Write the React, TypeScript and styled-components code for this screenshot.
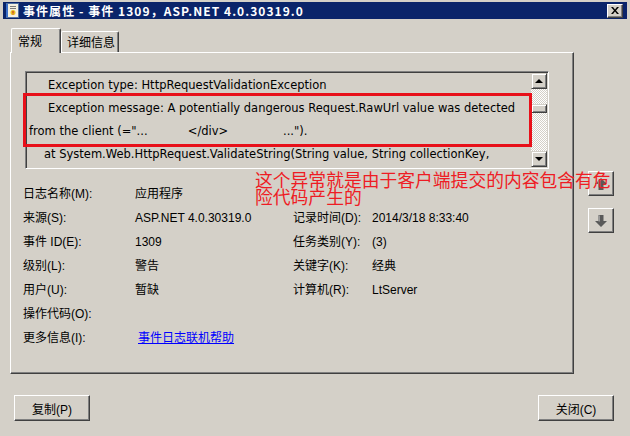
import styled, { createGlobalStyle } from "styled-components";

const FACE = "#d4d0c8";
const SHADOW = "#808080";
const DARK = "#404040";

const GlobalStyle = createGlobalStyle`
  html, body {
    margin: 0;
    padding: 0;
    background: ${FACE};
  }
  body {
    font-family: "Liberation Sans", "Noto Sans CJK SC", sans-serif;
    font-size: 12px;
    color: #000;
  }
`;

const PROPS: { label: string; value: string; label2?: string; value2?: string; link?: boolean }[] = [
  { label: "日志名称(M):", value: "应用程序" },
  { label: "来源(S):", value: "ASP.NET 4.0.30319.0", label2: "记录时间(D):", value2: "2014/3/18 8:33:40" },
  { label: "事件 ID(E):", value: "1309", label2: "任务类别(Y):", value2: "(3)" },
  { label: "级别(L):", value: "警告", label2: "关键字(K):", value2: "经典" },
  { label: "用户(U):", value: "暂缺", label2: "计算机(R):", value2: "LtServer" },
  { label: "操作代码(O):", value: "" },
  { label: "更多信息(I):", value: "事件日志联机帮助", link: true },
];

export default function App() {
  return (
    <>
      <GlobalStyle />
      <Window>
        <TitleBar>
          <TitleIcon />
          <TitleText>事件属性 - 事件 1309，ASP.NET 4.0.30319.0</TitleText>
          <CloseButton>
            <svg width="8" height="7" viewBox="0 0 8 7">
              <path d="M0 0h2l2 2.5L6 0h2L5 3.5 8 7H6L4 4.5 2 7H0l3-3.5z" fill="#000" />
            </svg>
          </CloseButton>
        </TitleBar>

        <Body>
          <MainColumn>
            <TabRow>
              <Tab $active $width={50}>常规</Tab>
              <Tab $width={58}>详细信息</Tab>
            </TabRow>
            <TabPanel>
              <MessageBox>
                <MessageText>
                  <Line $indent={19}>Exception type: HttpRequestValidationException</Line>
                  <Line $indent={19}>
                    Exception message: A potentially dangerous Request.RawUrl value was detected from the
                    client (="...&nbsp;&nbsp;&nbsp;&nbsp;&nbsp;&nbsp;&nbsp;&nbsp;&nbsp;&nbsp;&nbsp;&lt;/div&gt;&nbsp;&nbsp;&nbsp;&nbsp;&nbsp;&nbsp;&nbsp;&nbsp;&nbsp;&nbsp;&nbsp;&nbsp;&nbsp;&nbsp;&nbsp;...").
                  </Line>
                  <Line $indent={15}>at System.Web.HttpRequest.ValidateString(String value, String collectionKey,</Line>
                </MessageText>
                <ScrollBar>
                  <ScrollArrow>
                    <Triangle $up />
                  </ScrollArrow>
                  <ScrollTrack>
                    <ScrollThumb />
                  </ScrollTrack>
                  <ScrollArrow>
                    <Triangle />
                  </ScrollArrow>
                </ScrollBar>
                <Highlight />
              </MessageBox>

              <PropGrid>
                {PROPS.map((p) => (
                  <PropRow key={p.label}>
                    <PropLabel>{p.label}</PropLabel>
                    {p.link ? <LinkValue>{p.value}</LinkValue> : <PropValue>{p.value}</PropValue>}
                    <PropLabel>{p.label2 ?? ""}</PropLabel>
                    <PropValue>{p.value2 ?? ""}</PropValue>
                  </PropRow>
                ))}
              </PropGrid>
            </TabPanel>
          </MainColumn>

          <SideColumn>
            <NavButton>
              <svg width="14" height="14" viewBox="0 0 14 14">
                <path d="M7 1L1 7h3.5v6h5V7H13z" fill="#5a5a5a" />
                <path d="M7 1L4 4v3h1.5V4.5L7 3z" fill="#9a9a9a" />
              </svg>
            </NavButton>
            <NavButton>
              <svg width="14" height="14" viewBox="0 0 14 14">
                <path d="M7 13L1 7h3.5V1h5v6H13z" fill="#5a5a5a" />
                <path d="M4.5 1.5h1.5v6H4.5z" fill="#9a9a9a" />
              </svg>
            </NavButton>
          </SideColumn>
        </Body>

        <Footer>
          <PushButton>复制(P)</PushButton>
          <PushButton>关闭(C)</PushButton>
        </Footer>

        <Annotation>
          这个异常就是由于客户端提交的内容包含有危
          <br />
          险代码产生的
        </Annotation>
      </Window>
    </>
  );
}

function TitleIcon() {
  return (
    <svg width="15" height="15" viewBox="0 0 15 15">
      <rect x="1.5" y="0.5" width="12" height="14" fill="#f4f0e0" stroke="#5070a0" />
      <rect x="1" y="1" width="2" height="13" fill="#3b6fc8" />
      <rect x="5" y="3" width="6" height="1" fill="#7a7a7a" />
      <rect x="5" y="5" width="6" height="1" fill="#7a7a7a" />
      <circle cx="8" cy="9.5" r="2.5" fill="#e8c020" />
      <rect x="7.5" y="8" width="1" height="2" fill="#c02020" />
      <rect x="7.5" y="10.5" width="1" height="1" fill="#c02020" />
    </svg>
  );
}

// Styled Components

const Window = styled.div`
  position: relative;
  width: 630px;
  height: 436px;
  box-sizing: border-box;
  padding: 2px 3px 0 3px;
  background: ${FACE};
  overflow: hidden;
`;

const TitleBar = styled.div`
  display: flex;
  align-items: center;
  height: 17px;
  padding: 0 4px 0 2px;
  background: #0a246a;
  gap: 3px;
`;

const TitleText = styled.div`
  flex: 1;
  color: #fff;
  font-family: "Noto Sans CJK SC", "DejaVu Sans", sans-serif;
  font-weight: 700;
  font-size: 12px;
  line-height: 17px;
  letter-spacing: 1.05px;
  white-space: nowrap;
`;

const CloseButton = styled.div`
  display: flex;
  align-items: center;
  justify-content: center;
  width: 14px;
  height: 12px;
  background: ${FACE};
  border: 1px solid;
  border-color: #fff ${DARK} ${DARK} #fff;
  box-shadow: inset -1px -1px ${SHADOW};
`;

const Body = styled.div`
  display: flex;
  padding-top: 9px;
`;

const MainColumn = styled.div`
  display: flex;
  flex-direction: column;
  margin-left: 7px;
  width: 564px;
`;

const TabRow = styled.div`
  display: flex;
  align-items: flex-end;
  height: 25px;
  padding-left: 1px;
  position: relative;
  z-index: 1;
  margin-bottom: -1px;
`;

const Tab = styled.div<{ $active?: boolean; $width: number }>`
  box-sizing: border-box;
  width: ${({ $width }) => $width}px;
  height: ${({ $active }) => ($active ? "25px" : "21px")};
  margin-bottom: ${({ $active }) => ($active ? "0" : "1px")};
  padding: ${({ $active }) => ($active ? "3px 0 0 6px" : "1px 0 0 5px")};
  background: ${FACE};
  border-top: 1px solid #fff;
  border-left: 1px solid #fff;
  border-right: 1px solid ${DARK};
  box-shadow: inset -1px 0 ${SHADOW};
  border-radius: 2px 2px 0 0;
  font-family: "Noto Sans CJK SC", sans-serif;
  font-size: 12px;
  line-height: 17px;
`;

const TabPanel = styled.div`
  position: relative;
  box-sizing: border-box;
  height: 322px;
  border: 1px solid;
  border-color: #fff ${DARK} ${DARK} #fff;
  box-shadow: inset -1px -1px ${SHADOW};
  padding: 18px 0 0 14px;
`;

const MessageBox = styled.div`
  position: relative;
  display: flex;
  box-sizing: border-box;
  width: 524px;
  height: 98px;
  border: 1px solid;
  border-color: ${SHADOW} #fff #fff ${SHADOW};
  box-shadow: inset 1px 1px ${DARK};
  padding: 1px 0 1px 1px;
`;

const MessageText = styled.div`
  flex: 1;
  overflow: hidden;
  font-family: "DejaVu Sans", sans-serif;
  font-size: 11.5px;
  line-height: 23px;
  padding: 1px 4px 0 2px;
`;

const Line = styled.div<{ $indent: number }>`
  text-indent: ${({ $indent }) => $indent}px;
  white-space: normal;
`;

const ScrollBar = styled.div`
  display: flex;
  flex-direction: column;
  width: 16px;
  margin-right: 1px;
`;

const ScrollArrow = styled.div`
  display: flex;
  align-items: center;
  justify-content: center;
  box-sizing: border-box;
  width: 16px;
  height: 16px;
  background: ${FACE};
  border: 1px solid;
  border-color: ${FACE} ${DARK} ${DARK} ${FACE};
  box-shadow: inset 1px 1px #fff, inset -1px -1px ${SHADOW};
`;

const Triangle = styled.div<{ $up?: boolean }>`
  width: 0;
  height: 0;
  border-left: 4px solid transparent;
  border-right: 4px solid transparent;
  ${({ $up }) => ($up ? "border-bottom: 4px solid #000;" : "border-top: 4px solid #000;")}
`;

const ScrollTrack = styled.div`
  flex: 1;
  padding-top: 15px;
  background: repeating-conic-gradient(#fff 0 25%, ${FACE} 0 50%) 0 0 / 2px 2px;
`;

const ScrollThumb = styled.div`
  box-sizing: border-box;
  height: 9px;
  background: ${FACE};
  border: 1px solid;
  border-color: ${FACE} ${DARK} ${DARK} ${FACE};
  box-shadow: inset 1px 1px #fff, inset -1px -1px ${SHADOW};
`;

const Highlight = styled.div`
  position: absolute;
  left: -3px;
  top: 21px;
  width: 509px;
  height: 54px;
  box-sizing: border-box;
  border: 3px solid #e8101a;
  pointer-events: none;
`;

const PropGrid = styled.div`
  display: grid;
  grid-template-columns: 112px 158px 79px 1fr;
  margin: 13px 0 0 -2px;
`;

const PropRow = styled.div`
  display: contents;
`;

const PropLabel = styled.div`
  height: 24px;
  line-height: 24px;
  font-family: "Liberation Sans", "Noto Sans CJK SC", sans-serif;
  font-size: 12px;
  white-space: nowrap;
`;

const PropValue = styled(PropLabel)``;

const LinkValue = styled(PropLabel)`
  color: #0000ff;
  text-decoration: underline;
  padding-left: 3px;
`;

const SideColumn = styled.div`
  display: flex;
  flex-direction: column;
  gap: 12px;
  margin-left: 14px;
  padding-top: 143px;
`;

const NavButton = styled.div`
  display: flex;
  align-items: center;
  justify-content: center;
  box-sizing: border-box;
  width: 26px;
  height: 25px;
  background: ${FACE};
  border: 1px solid;
  border-color: #fff ${DARK} ${DARK} #fff;
  box-shadow: inset -1px -1px ${SHADOW};
`;

const Footer = styled.div`
  display: flex;
  justify-content: space-between;
  padding: 21px 13px 0 11px;
`;

const PushButton = styled.div`
  display: flex;
  align-items: center;
  justify-content: center;
  box-sizing: border-box;
  width: 76px;
  height: 26px;
  background: ${FACE};
  border: 1px solid;
  border-color: #fff ${DARK} ${DARK} #fff;
  box-shadow: inset -1px -1px ${SHADOW};
  font-family: "Liberation Sans", "Noto Sans CJK SC", sans-serif;
  font-size: 12px;
`;

const Annotation = styled.div`
  position: absolute;
  left: 255px;
  top: 171px;
  color: #ee1c24;
  font-family: "Noto Sans CJK SC", sans-serif;
  font-size: 17.8px;
  line-height: 17px;
  white-space: nowrap;
  pointer-events: none;
`;
